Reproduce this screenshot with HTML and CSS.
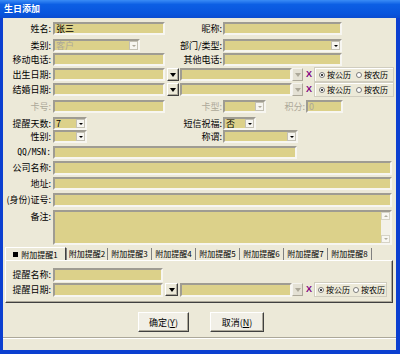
FILE: index.html
```html
<!DOCTYPE html>
<html lang="zh-CN">

<head>
  <meta charset="UTF-8">
  <title>生日添加</title>
  <link rel="stylesheet" href="styles.css">
</head>

<body>
  <div class="window">
    <div class="titlebar">生日添加</div>
    <div class="client">

      <div class="form">
        <div class="row">
          <span class="lbl">姓名:</span>
          <span class="cell"><span class="tb w112">张三</span></span>
          <span class="rlbl">昵称:</span>
          <span class="tb w119"></span>
        </div>
        <div class="row">
          <span class="lbl">类别:</span>
          <span class="cell"><span class="cb w87 dis"><span class="val">客户</span><i class="dd"></i></span></span>
          <span class="rlbl">部门/类型:</span>
          <span class="cb w119"><span class="val"></span><i class="dd"></i></span>
        </div>
        <div class="row">
          <span class="lbl">移动电话:</span>
          <span class="cell"><span class="tb w112"></span></span>
          <span class="rlbl">其他电话:</span>
          <span class="tb w119"></span>
        </div>
        <div class="row">
          <span class="lbl">出生日期:</span>
          <span class="tb w112"></span>
          <span class="db"></span>
          <span class="tb w112"></span>
          <span class="db off"></span>
          <span class="clear">X</span>
          <span class="radios">
            <span class="opt"><span class="radio on"></span>按公历</span>
            <span class="opt"><span class="radio"></span>按农历</span>
          </span>
        </div>
        <div class="row">
          <span class="lbl">结婚日期:</span>
          <span class="tb w112"></span>
          <span class="db"></span>
          <span class="tb w112"></span>
          <span class="db off"></span>
          <span class="clear">X</span>
          <span class="radios">
            <span class="opt"><span class="radio on"></span>按公历</span>
            <span class="opt"><span class="radio"></span>按农历</span>
          </span>
        </div>
        <div class="row">
          <span class="lbl grey">卡号:</span>
          <span class="cell"><span class="tb w112"></span></span>
          <span class="rlbl grey">卡型:</span>
          <span class="cb w43 dis"><span class="val"></span><i class="dd"></i></span>
          <span class="plbl grey">积分:</span>
          <span class="tb w37 grey">0</span>
        </div>
        <div class="row">
          <span class="lbl">提醒天数:</span>
          <span class="cell"><span class="cb w34"><span class="val">7</span><i class="dd"></i></span></span>
          <span class="rlbl">短信祝福:</span>
          <span class="cb w33"><span class="val">否</span><i class="dd"></i></span>
        </div>
        <div class="row">
          <span class="lbl">性别:</span>
          <span class="cell"><span class="cb w34"><span class="val"></span><i class="dd"></i></span></span>
          <span class="rlbl">称谓:</span>
          <span class="cb w75"><span class="val"></span><i class="dd"></i></span>
        </div>
        <div class="row">
          <span class="lbl latin">QQ/MSN:</span>
          <span class="tb w244"></span>
        </div>
        <div class="row">
          <span class="lbl">公司名称:</span>
          <span class="tb w339 h14"></span>
        </div>
        <div class="row">
          <span class="lbl">地址:</span>
          <span class="tb w339"></span>
        </div>
        <div class="row">
          <span class="lbl">(身份)证号:</span>
          <span class="tb w339 h14"></span>
        </div>
        <div class="row">
          <span class="lbl">备注:</span>
          <span class="tb memo w339">
            <span class="vscroll"><i class="sb up"></i><i class="sb down"></i></span>
          </span>
        </div>
      </div>

      <div class="tabs">
        <div class="tabstrip">
          <span class="tab sel"><b class="mark"></b>附加提醒1</span>
          <span class="tab first">附加提醒2</span>
          <span class="tab">附加提醒3</span>
          <span class="tab">附加提醒4</span>
          <span class="tab">附加提醒5</span>
          <span class="tab">附加提醒6</span>
          <span class="tab">附加提醒7</span>
          <span class="tab">附加提醒8</span>
        </div>
        <div class="panel">
          <div class="row">
            <span class="lbl">提醒名称:</span>
            <span class="tb w110"></span>
          </div>
          <div class="row">
            <span class="lbl">提醒日期:</span>
            <span class="tb w110"></span>
            <span class="db w13"></span>
            <span class="tb w112"></span>
            <span class="db off"></span>
            <span class="clear">X</span>
            <span class="radios short">
              <span class="opt"><span class="radio on"></span>按公历</span>
              <span class="opt"><span class="radio"></span>按农历</span>
            </span>
          </div>
        </div>
      </div>

      <div class="buttons">
        <button class="btn ok">确定(<u>Y</u>)</button>
        <button class="btn cancel">取消(<u>N</u>)</button>
      </div>

      <div class="status"></div>
    </div>
  </div>
</body>

</html>
```

FILE: styles.css
```css
* {
  box-sizing: border-box;
}

body {
  margin: 0;
  font-family: "Noto Sans CJK SC", "Liberation Sans", sans-serif;
  font-size: 9px;
  color: #000;
  background: #fff;
}

.window {
  width: 400px;
  height: 354px;
  display: flex;
  flex-direction: column;
  background: #0b3fd0;
}

.titlebar {
  height: 18px;
  line-height: 18px;
  padding-left: 4px;
  color: #fff;
  font-weight: bold;
  font-size: 9px;
  background: linear-gradient(#3a8cf6, #0c5fe4 25%, #0855dd 75%, #0a4cd0);
}

.client {
  flex: 1;
  margin: 0 4px 4px 3px;
  background: #ece9d8;
  display: flex;
  flex-direction: column;
}

/* main form */
.form {
  display: grid;
  grid-template-rows: 17px 14px 15px 15px 17px 17px 13px 16px 15px 16px 16px 17px 35px;
  padding-top: 4px;
}

.row {
  display: flex;
  align-items: flex-start;
}

.lbl {
  width: 48px;
  margin-right: 2px;
  text-align: right;
  white-space: nowrap;
  line-height: 13px;
}

.rlbl {
  width: 57px;
  margin-right: 1px;
  text-align: right;
  white-space: nowrap;
  line-height: 13px;
}

.plbl {
  width: 39px;
  margin-right: 1px;
  text-align: right;
  line-height: 13px;
}

.grey {
  color: #aca899;
}

.latin {
  font-family: "DejaVu Sans Mono", monospace;
  font-size: 8px;
}

.cell {
  width: 112px;
  display: flex;
}

.tb,
.cb {
  display: flex;
  align-items: center;
  height: 13px;
  background: #dcd18a;
  border: 2px solid;
  border-color: #9f9c92 #f7f6f1 #f7f6f1 #9f9c92;
  padding-left: 1px;
  line-height: 9px;
  white-space: nowrap;
}

.h14 {
  height: 14px;
}

.w33 { width: 33px; }
.w34 { width: 34px; }
.w37 { width: 37px; }
.w43 { width: 43px; }
.w75 { width: 75px; }
.w87 { width: 87px; }
.w110 { width: 110px; }
.w112 { width: 112px; }
.w119 { width: 119px; }
.w244 { width: 244px; }
.w339 { width: 339px; }

.cb .val {
  flex: 1;
}

.cb.dis .val {
  color: #aca899;
}

.dd {
  width: 9px;
  height: 9px;
  background: #f6f5f0;
  border: 1px solid #c4c1b4;
  display: flex;
  align-items: center;
  justify-content: center;
}

.dd::after {
  content: "";
  border-left: 2px solid transparent;
  border-right: 2px solid transparent;
  border-top: 2px solid #000;
}

.cb.dis .dd::after {
  border-top-color: #aca899;
}

/* date picker buttons */
.db {
  width: 12px;
  height: 13px;
  margin-left: 2px;
  margin-right: 1px;
  background: #ece9d8;
  border: 1px solid;
  border-color: #fff #404040 #404040 #fff;
  box-shadow: inset -1px -1px #aca899;
  display: flex;
  align-items: center;
  justify-content: center;
}

.db::after {
  content: "";
  border-left: 3px solid transparent;
  border-right: 3px solid transparent;
  border-top: 4px solid #000;
}

.db.off {
  width: 11px;
  margin-left: 0;
  margin-right: 3px;
  border-color: #f4f3ee #aca899 #aca899 #f4f3ee;
  box-shadow: none;
  background: #e4e1d4;
}

.db.off::after {
  border-top-color: #aca899;
}

.db.w13 {
  width: 13px;
  margin-left: 2px;
  margin-right: 2px;
}

.clear {
  width: 6px;
  margin-right: 2px;
  color: #800080;
  font-family: "Liberation Sans", sans-serif;
  font-weight: bold;
  font-size: 9px;
  line-height: 13px;
}

.radios {
  width: 80px;
  height: 15px;
  margin-top: -1px;
  border: 1px solid #d0cdbf;
  box-shadow: inset 1px 1px #fff;
  display: flex;
  align-items: center;
  padding-left: 4px;
  gap: 5px;
  font-size: 8px;
  white-space: nowrap;
}

.radios.short {
  width: 73px;
  padding-left: 3px;
  gap: 3px;
}

.opt {
  display: flex;
  align-items: center;
  gap: 2px;
}

.radio {
  width: 6px;
  height: 6px;
  border-radius: 50%;
  border: 1px solid #7b7b7b;
  background: #fff;
  display: flex;
  align-items: center;
  justify-content: center;
}

.radio.on::after {
  content: "";
  width: 2px;
  height: 2px;
  border-radius: 50%;
  background: #000;
}

/* memo */
.memo {
  height: 35px;
  align-items: stretch;
  justify-content: flex-end;
  padding: 0;
}

.vscroll {
  width: 9px;
  background: #f3f1e8;
  display: flex;
  flex-direction: column;
  justify-content: space-between;
}

.sb {
  height: 8px;
  background: #f8f7f2;
  border: 1px solid #d6d3c6;
  display: flex;
  align-items: center;
  justify-content: center;
}

.sb.up::after {
  content: "";
  border-left: 2px solid transparent;
  border-right: 2px solid transparent;
  border-bottom: 2px solid #b0ad9f;
}

.sb.down::after {
  content: "";
  border-left: 2px solid transparent;
  border-right: 2px solid transparent;
  border-top: 2px solid #b0ad9f;
}

/* tabs */
.tabs {
  margin: 2px 0 0 2px;
  width: 388px;
}

.tabstrip {
  display: flex;
  align-items: flex-end;
  height: 13px;
}

.tab {
  width: 44px;
  height: 12px;
  line-height: 11px;
  font-size: 8px;
  text-align: center;
  border-right: 1px solid #808080;
  white-space: nowrap;
}

.tab.first {
  width: 42px;
  border-left: 1px solid #808080;
}

.tab.sel {
  width: 61px;
  height: 13px;
  border-top: 1px solid #fff;
  border-left: 1px solid #fff;
  border-right: 1px solid #404040;
  display: flex;
  align-items: center;
  justify-content: center;
  gap: 3px;
}

.mark {
  width: 5px;
  height: 5px;
  background: #000;
}

.panel {
  height: 43px;
  border: 1px solid;
  border-color: #fff #404040 #404040 #fff;
  box-shadow: inset -1px -1px #aca899;
  padding-top: 7px;
}

.panel .row {
  height: 15px;
}

.panel .lbl {
  width: 45px;
}

.panel .tb {
  height: 14px;
}

/* buttons */
.buttons {
  display: flex;
  gap: 21px;
  margin-top: 9px;
  padding-left: 135px;
}

.btn {
  height: 20px;
  padding: 0;
  font-family: inherit;
  font-size: 9px;
  background: #f1efe6;
  border: 1px solid;
  border-color: #fff #404040 #404040 #fff;
  box-shadow: inset -1px -1px #aca899;
}

.ok {
  width: 51px;
}

.cancel {
  width: 54px;
}

.status {
  flex: 1;
  margin-top: 5px;
  border-top: 1px solid #aca899;
  box-shadow: inset 0 1px #fff;
}
```
